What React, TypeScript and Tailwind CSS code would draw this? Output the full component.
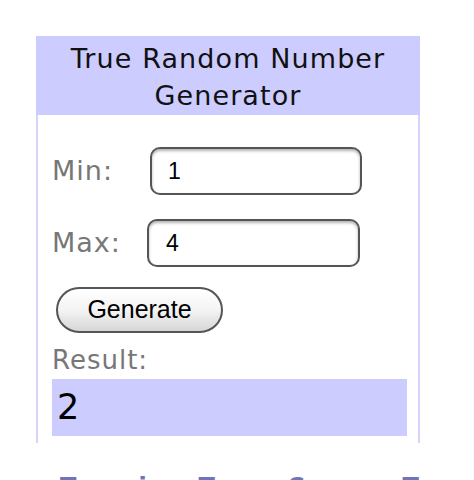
export default function App() {
  return (
    <div className="w-[474px] h-[480px] overflow-hidden bg-white relative" style={{ fontFamily: '"DejaVu Sans", Verdana, sans-serif' }}>
      <div className="ml-[36px] mt-[36px] w-[384px]">
        {/* header */}
        <div className="bg-[#ccccff] h-[79px] flex flex-col items-center justify-center text-[27px] leading-[37px] tracking-[1.1px] text-[#111] pt-[2px]">
          <div>True Random Number</div>
          <div>Generator</div>
        </div>

        {/* body */}
        <div className="border-x-2 border-[#d4d4fa] h-[328px] pl-[14px] pr-[12px] pt-[32px]">
          <div className="flex items-center h-[48px]">
            <span className="text-[27px] text-[#777] tracking-[1px] w-[98px]">Min:</span>
            <div className="w-[212px] h-[48px] rounded-[10px] border-2 border-[#555] shadow-[inset_0_2px_3px_rgba(0,0,0,0.3)] flex items-center pl-[16px] text-[23px] text-black" style={{ fontFamily: '"Liberation Sans", Arial, sans-serif' }}>
              1
            </div>
          </div>
          <div className="flex items-center h-[48px] mt-[24px]">
            <span className="text-[27px] text-[#777] tracking-[1px] w-[95px]">Max:</span>
            <div className="w-[213px] h-[48px] rounded-[10px] border-2 border-[#555] shadow-[inset_0_2px_3px_rgba(0,0,0,0.3)] flex items-center pl-[17px] text-[23px] text-black" style={{ fontFamily: '"Liberation Sans", Arial, sans-serif' }}>
              4
            </div>
          </div>
          <div className="mt-[20px] ml-[4px] w-[167px] h-[46px] rounded-full border-2 border-[#555] bg-gradient-to-b from-white via-[#f4f4f4] to-[#d6d6d6] flex items-center justify-center text-[25px] text-black" style={{ fontFamily: '"Liberation Sans", Arial, sans-serif' }}>
            Generate
          </div>
          <div className="text-[26px] text-[#777] tracking-[1px] leading-[30px] mt-[12px]">Result:</div>
          <div className="mt-[4px] w-[355px] h-[57px] bg-[#ccccff] flex items-center pl-[5px] text-[35px] text-black">
            2
          </div>
        </div>
      </div>

      {/* link row, cut off at the bottom edge */}
      <div className="absolute left-0 top-[473px] flex text-[24px] leading-[28px] text-[#7373b8] font-bold">
        <span className="ml-[60px]">T</span>
        <span className="ml-[62px]">i</span>
        <span className="ml-[52px]">T</span>
        <span className="ml-[72px]">C</span>
        <span className="ml-[98px]">T</span>
      </div>
    </div>
  );
}
